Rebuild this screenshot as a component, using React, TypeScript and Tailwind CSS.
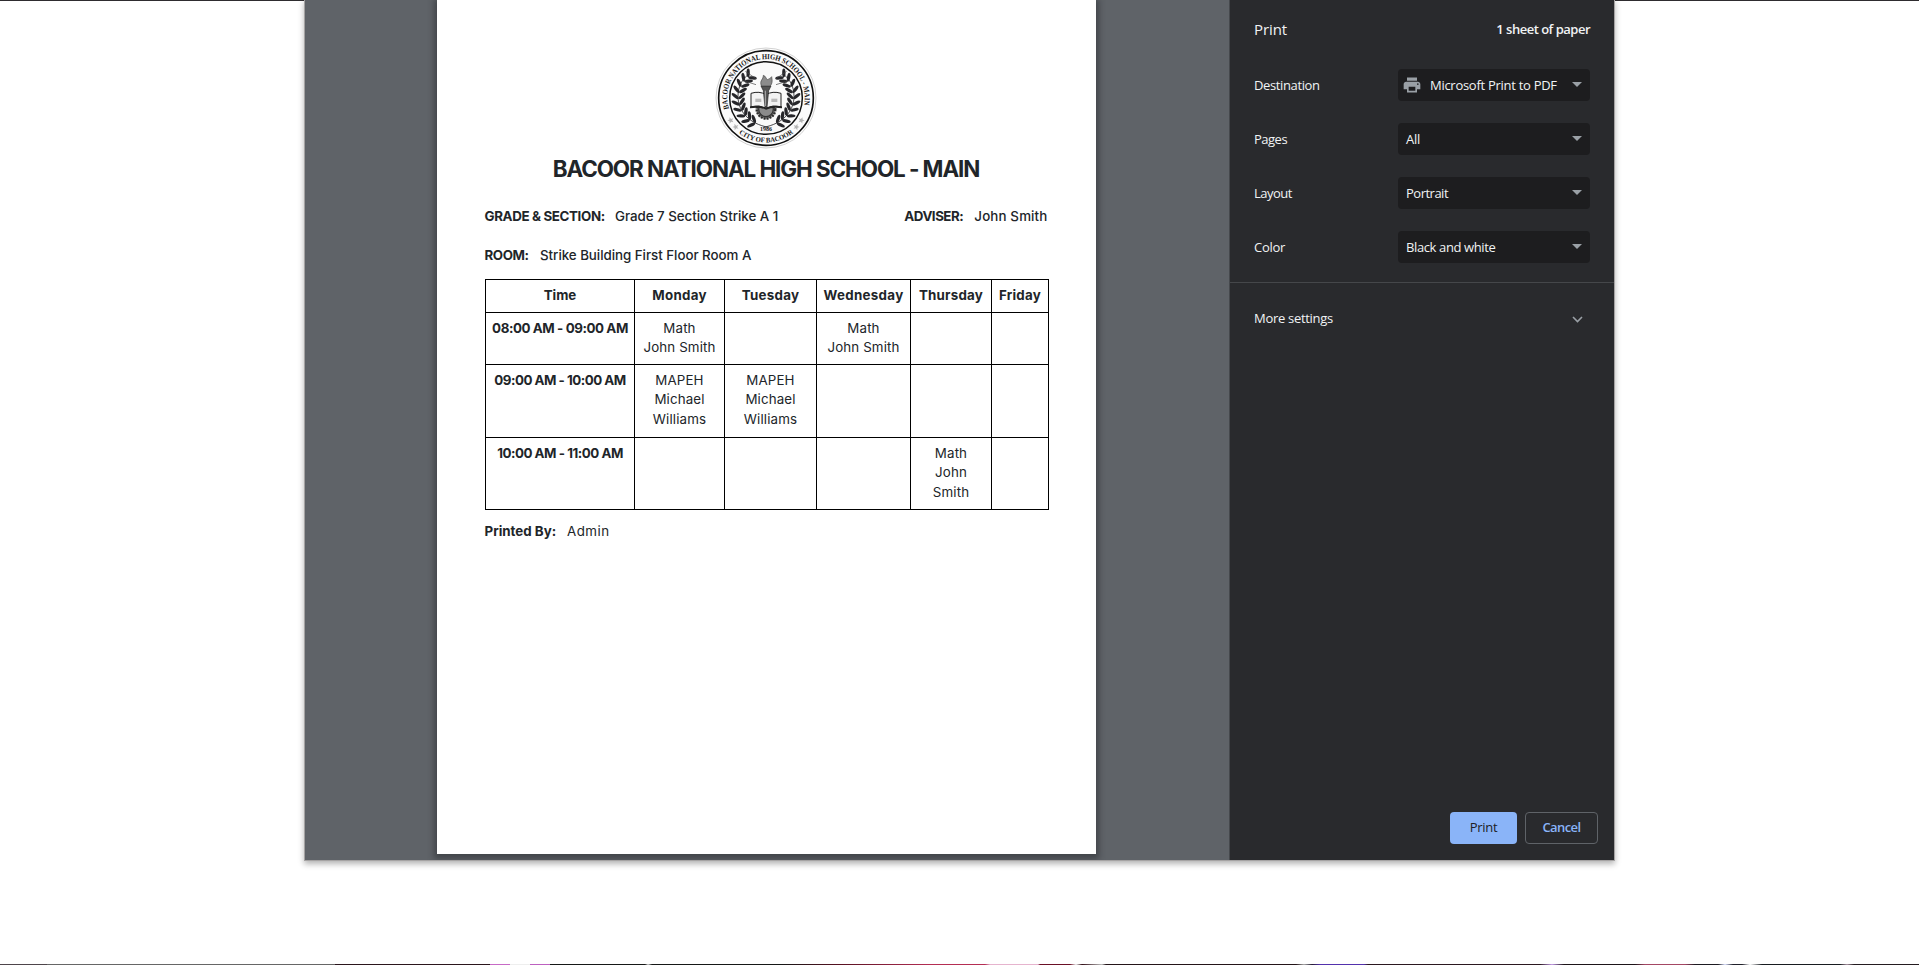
import type { ReactNode } from "react";

const rays = [
  [-30, -58, -62, -80],
  [-30, -40, -68, -52],
  [30, -58, 62, -80],
  [30, -40, 68, -52],
];

const leafAngles = [113, 126, 139, 152, 165, 178, 191, 204, 217, 229];

function Branch() {
  return (
    <g fill="#26262a">
      <path d="M8 88 C-50 78 -84 40 -84 -5 C-84 -34 -72 -58 -50 -72" fill="none" stroke="#26262a" strokeWidth="2.5" />
      {leafAngles.map((a) => {
        const r = (a * Math.PI) / 180;
        const x = 82 * Math.cos(r);
        const y = 82 * Math.sin(r);
        return (
          <g key={a} transform={`translate(${x} ${y}) rotate(${a + 90})`}>
            <ellipse cx="9" cy="-10" rx="13" ry="5" transform="rotate(-48 9 -10)" />
            <ellipse cx="9" cy="10" rx="13" ry="5" transform="rotate(48 9 10)" />
          </g>
        );
      })}
    </g>
  );
}

function Star({ x, y, r }: { x: number; y: number; r: number }) {
  return (
    <path
      transform={`translate(${x} ${y}) rotate(${r})`}
      d="M0 -10 L2.6 -3.4 L9.5 -3.1 L4.1 1.3 L5.9 8.1 L0 4.3 L-5.9 8.1 L-4.1 1.3 L-9.5 -3.1 L-2.6 -3.4 Z"
      fill="#b4b4b4"
    />
  );
}

function Seal() {
  return (
    <svg className="size-[102px]" viewBox="-153 -153 306 306">
      <defs>
        <path id="arc-top" d="M-110.6 34 A116 116 0 1 1 110.6 34" />
        <path id="arc-bottom" d="M-110 75 A133 133 0 0 0 110 75" />
      </defs>
      <circle r="150" fill="#fff" stroke="#c9c9c9" strokeWidth="2.5" />
      <circle r="142" fill="#fbfbfb" stroke="#111" strokeWidth="5" />
      <circle r="109" fill="#fafafa" stroke="#111" strokeWidth="4.5" />
      <g fill="#141414" fontFamily="Liberation Serif, serif" fontWeight="700">
        <text fontSize="23">
          <textPath href="#arc-top" textLength="420" lengthAdjust="spacingAndGlyphs" startOffset="2">BACOOR NATIONAL HIGH SCHOOL - MAIN</textPath>
        </text>
        <text fontSize="21">
          <textPath href="#arc-bottom" textLength="176" lengthAdjust="spacingAndGlyphs" startOffset="42">CITY OF BACOOR</textPath>
        </text>
        <text x="-18" y="98" fontSize="17" textLength="36" lengthAdjust="spacingAndGlyphs">1986</text>
      </g>
      <Star x={-106} y={67} r={-20} />
      <Star x={-91} y={87} r={-20} />
      <Star x={106} y={67} r={20} />
      <Star x={91} y={87} r={20} />
      <Branch />
      <g transform="scale(-1 1)">
        <Branch />
      </g>
      {rays.map(([x1, y1, x2, y2], i) => (
        <line key={i} x1={x1} y1={y1} x2={x2} y2={y2} stroke="#444" strokeWidth="2" />
      ))}
      <circle cx="0" cy="34" r="28" fill="#777" stroke="#2b2b2b" strokeWidth="7" strokeDasharray="6 3" />
      <circle cx="0" cy="34" r="22" fill="#8b8b8b" stroke="#333" strokeWidth="4" />
      <path d="M-45 -14 Q-20 -22 0 -10 Q20 -22 45 -14 V26 Q20 20 0 30 Q-20 20 -45 26 Z" fill="#f2f2f2" stroke="#222" strokeWidth="3" />
      <path d="M-48 25 Q-20 20 0 30 Q20 20 48 25 V31 Q20 26 0 35 Q-20 26 -48 31 Z" fill="#222" />
      <rect x="-32" y="2" width="18" height="10" fill="#b9b9b9" />
      <rect x="16" y="2" width="18" height="10" fill="#b9b9b9" />
      <path d="M-15 -36 H15 L8 -22 L3 28 H-3 L-8 -22 Z" fill="#555" stroke="#222" strokeWidth="2" />
      <path d="M-2 -22 V24" stroke="#ddd" strokeWidth="2" />
      <path d="M-14 -36 C-20 -54 -8 -54 -8 -68 C-1 -66 0 -58 4 -55 C9 -57 15 -60 17 -64 C20 -50 18 -42 13 -36 Z" fill="#8c8c8c" stroke="#444" strokeWidth="2" />
    </svg>
  );
}

function Field({ label, labelClass, value, valueClass }: { label: string; labelClass: string; value: string; valueClass: string }) {
  return (
    <div className="flex whitespace-nowrap">
      <span className={`shrink-0 font-bold ${labelClass}`}>{label}</span>
      <span className={valueClass}>{value}</span>
    </div>
  );
}

function Cell({ head, lines, className = "" }: { head?: boolean; lines: string[]; className?: string }) {
  return (
    <td className={`border border-black p-0 pt-[5.8px] pl-px text-center align-top leading-[19.6px] whitespace-nowrap ${head ? "font-bold" : "tracking-[0.13px]"} ${className}`}>
      {lines.map((l, i) => (
        <div key={i}>{l}</div>
      ))}
    </td>
  );
}

const rows = [
  { time: "08:00 AM - 09:00 AM", tracking: "tracking-[-0.42px]", height: "h-[52px]", cells: [["Math", "John Smith"], [], ["Math", "John Smith"], [], []] },
  { time: "09:00 AM - 10:00 AM", tracking: "tracking-[-0.5px]", height: "h-[73px]", cells: [["MAPEH", "Michael", "Williams"], ["MAPEH", "Michael", "Williams"], [], [], []] },
  { time: "10:00 AM - 11:00 AM", tracking: "tracking-[-0.47px]", height: "h-[72px]", cells: [[], [], [], ["Math", "John", "Smith"], []] },
];

function Sheet() {
  return (
    <div className="flex h-[854px] w-[659px] flex-col bg-white px-[48px] pt-[47px] font-[Inter,sans-serif] text-[13.33px] text-[#212529] shadow-[0_2px_6px_3px_rgba(30,33,38,0.45)]">
      <div className="flex justify-center">
        <Seal />
      </div>
      <h1 className="mt-[4px] text-center text-[22.4px] leading-[32px] font-bold tracking-[-1.06px] whitespace-nowrap">
        BACOOR NATIONAL HIGH SCHOOL - MAIN
      </h1>
      <div className="mt-[21px] flex justify-between leading-5 font-medium">
        <Field label="GRADE & SECTION:" labelClass="w-[130.5px] tracking-[-0.35px]" value="Grade 7 Section Strike A 1" valueClass="tracking-[-0.03px]" />
        <Field label="ADVISER:" labelClass="w-[70px] tracking-[-0.48px]" value="John Smith" valueClass="tracking-[0.15px]" />
      </div>
      <div className="mt-[19px] leading-5 font-medium">
        <Field label="ROOM:" labelClass="w-[55.5px] tracking-[-0.4px]" value="Strike Building First Floor Room A" valueClass="tracking-[-0.03px]" />
      </div>
      <table className="mt-[14px] w-[563px] table-fixed border-collapse">
        <colgroup>
          <col className="w-[149px]" />
          <col className="w-[90px]" />
          <col className="w-[92px]" />
          <col className="w-[94px]" />
          <col className="w-[81px]" />
          <col className="w-[57px]" />
        </colgroup>
        <tbody>
          <tr className="h-[33px]">
            <Cell head lines={["Time"]} />
            <Cell head lines={["Monday"]} className="tracking-[0.28px]" />
            <Cell head lines={["Tuesday"]} className="tracking-[0.28px]" />
            <Cell head lines={["Wednesday"]} className="tracking-[0.32px]" />
            <Cell head lines={["Thursday"]} className="tracking-[0.22px]" />
            <Cell head lines={["Friday"]} className="tracking-[0.22px]" />
          </tr>
          {rows.map((r) => (
            <tr key={r.time} className={r.height}>
              <Cell head lines={[r.time]} className={r.tracking} />
              {r.cells.map((c, i) => (
                <Cell key={i} lines={c} />
              ))}
            </tr>
          ))}
        </tbody>
      </table>
      <div className="mt-[11px] leading-5">
        <Field label="Printed By:" labelClass="w-[82.5px]" value="Admin" valueClass="tracking-[0.5px]" />
      </div>
    </div>
  );
}

function PrinterIcon() {
  return (
    <svg className="size-[20px]" viewBox="0 0 24 24" fill="#9aa0a6">
      <path d="M19 8H5c-1.660 0-3 1.340-3 3v6h4v4h12v-4h4v-6c0-1.660-1.340-3-3-3zm-3 11H8v-5h8v5zm3-7c-.55 0-1-.45-1-1s.45-1 1-1 1 .45 1 1-.45 1-1 1zM18 3H6v4h12V3z" />
    </svg>
  );
}

function Setting({ label, value, icon, labelClass, valueClass }: { label: string; value: string; icon?: ReactNode; labelClass: string; valueClass: string }) {
  return (
    <div className="flex h-[54px] items-center justify-between">
      <span className={`pt-px ${labelClass}`}>{label}</span>
      <div className={`flex h-8 w-[192px] items-center rounded bg-[#1d1d1f] pr-2 ${icon ? "pl-1" : "pl-2"}`}>
        {icon}
        <span className={`${icon ? "ml-[8px]" : ""} grow pt-px whitespace-nowrap ${valueClass}`}>{value}</span>
        <svg className="mb-px h-[5px] w-[10px]" viewBox="0 0 10 5">
          <path d="M0 0h10L5 5z" fill="#9aa0a6" />
        </svg>
      </div>
    </div>
  );
}

function Sidebar() {
  return (
    <aside className="flex w-[385px] flex-col border-l border-[#45484c] bg-[#292a2d] font-['Open_Sans',sans-serif] text-[13px] text-[#f1f3f4]">
      <div className="flex h-[58px] items-center justify-between px-6">
        <span className="text-[15px] leading-5 tracking-[-0.1px]">Print</span>
        <span className="leading-5 font-semibold tracking-[-0.5px]">1 sheet of paper</span>
      </div>
      <div className="border-b border-[#45474a] px-6 pb-[8px]">
        <Setting label="Destination" value="Microsoft Print to PDF" icon={<PrinterIcon />} labelClass="tracking-[-0.38px]" valueClass="tracking-[-0.28px]" />
        <Setting label="Pages" value="All" labelClass="tracking-[-0.5px]" valueClass="tracking-[-0.2px]" />
        <Setting label="Layout" value="Portrait" labelClass="tracking-[-0.5px]" valueClass="tracking-[-0.5px]" />
        <Setting label="Color" value="Black and white" labelClass="tracking-[-0.3px]" valueClass="tracking-[-0.38px]" />
      </div>
      <div className="mt-[12px] flex h-12 items-center justify-between pr-[31px] pl-6">
        <span className="tracking-[-0.3px]">More settings</span>
        <svg className="h-[7px] w-[11px]" viewBox="0 0 11 7" fill="none" stroke="#9aa0a6" strokeWidth="1.6">
          <path d="M1 1l4.500 4.500L10 1" />
        </svg>
      </div>
      <div className="mt-auto flex justify-end gap-2 pr-4 pb-4">
        <button className="h-8 w-[67px] rounded bg-[#8ab4f8] pb-px tracking-[-0.3px] text-[#202124]">Print</button>
        <button className="h-8 w-[73px] rounded border border-[#5f6368] pb-px font-semibold tracking-[-0.6px] text-[#8ab4f8]">Cancel</button>
      </div>
    </aside>
  );
}

export default function App() {
  return (
    <div className="flex h-[965px] w-full flex-col overflow-hidden bg-white">
      <div className="flex h-[860px] justify-center bg-[linear-gradient(#2e2c2f_1px,transparent_1px)]">
        <div className="flex h-[860px] w-[1309px] shadow-[0_0_0_1px_#a5a3a3,0_3px_6px_1px_rgba(0,0,0,0.3)]">
          <div className="flex grow justify-center overflow-hidden bg-[#5f6368] pr-[2px]">
            <Sheet />
          </div>
          <Sidebar />
        </div>
      </div>
      <div className="mt-auto h-px bg-[linear-gradient(90deg,#4e454b_0_47px,#666_47px_335px,#2b161d_335px_490px,#c76ac6_490px_510px,#eee_510px_530px,#bd61c0_530px_550px,#161817_550px_645px,#ccc_648px,#161817_652px_780px,#581222_840px,#b52e54_930px_985px,#e6b4ce_990px_1038px,#6b1026_1040px_1070px,#eee_1076px,#331018_1082px,#bbb_1102px,#241519_1106px_1296px,#aaa_1304px,#241c32_1312px,#5432ad_1320px_1364px,#2b1820_1368px_1540px,#c29be5_1552px,#1d1519_1564px_1635px,#a44764_1645px_1685px,#1d1b22_1695px_1718px,#dce2ff_1725px,#20202a_1733px_1742px,#fff_1750px,#181c20_1762px_1840px,#a792a0_1847px,#241c20_1854px)]" />
    </div>
  );
}
